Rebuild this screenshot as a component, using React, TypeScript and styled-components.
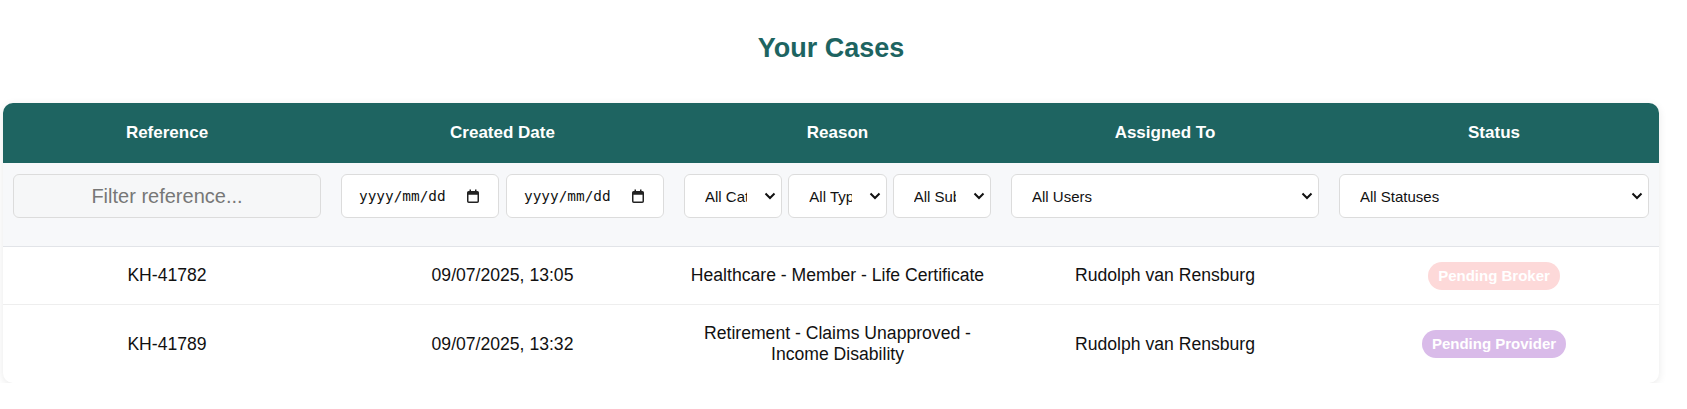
import styled, { createGlobalStyle } from "styled-components";

const GlobalStyle = createGlobalStyle`
  body {
    margin: 0;
    background: #ffffff;
    font-family: "Liberation Sans", Arial, sans-serif;
    color: #111111;
  }
`;

const COLUMNS = "328px 343px 327px 328px 1fr";

const Page = styled.div`
  width: 1656px;
  margin-left: 3px;
  padding-top: 33px;
`;

const Title = styled.h1`
  margin: 0 0 39px;
  text-align: center;
  font-size: 27px;
  line-height: 31px;
  font-weight: 700;
  color: #1d6461;
`;

const Card = styled.div`
  background: #ffffff;
  border-radius: 10px;
  overflow: hidden;
  box-shadow: 0 2px 8px rgba(0, 0, 0, 0.09);
`;

const HeaderRow = styled.div`
  display: grid;
  grid-template-columns: ${COLUMNS};
  height: 60px;
  align-items: center;
  background: #1e6461;
`;

const HeaderCell = styled.div`
  text-align: center;
  color: #ffffff;
  font-weight: 700;
  font-size: 17px;
`;

const FilterRow = styled.div`
  display: grid;
  grid-template-columns: ${COLUMNS};
  background: #f7f8fa;
  border-bottom: 1px solid #e2e4e8;
`;

const FilterCell = styled.div`
  display: flex;
  gap: 7px;
  padding: 11px 10px 28px;
`;

const SelectGroup = styled.div`
  display: flex;
  gap: 6px;
  width: 100%;
`;

const TextFilter = styled.input`
  box-sizing: border-box;
  width: 100%;
  height: 44px;
  padding: 0 16px;
  border: 1px solid #dcdcdc;
  border-radius: 6px;
  background: #f6f7f8;
  font-family: "Liberation Sans", Arial, sans-serif;
  font-size: 20px;
  text-align: center;
  color: #333;

  &::placeholder {
    color: #777777;
  }
`;

const FieldWrap = styled.div`
  position: relative;
  flex: 1;
  min-width: 0;
  display: flex;
`;

const DateFilter = styled.input`
  box-sizing: border-box;
  width: 100%;
  height: 44px;
  padding: 0 40px 0 17px;
  border: 1px solid #dcdcdc;
  border-radius: 6px;
  background: #ffffff;
  font-family: "DejaVu Sans Mono", monospace;
  font-size: 14.4px;
  color: #111;

  &::placeholder {
    color: #111111;
  }
`;

const FieldIcon = styled.svg<{ $right: number }>`
  position: absolute;
  top: 50%;
  right: ${(p) => p.$right}px;
  transform: translateY(-50%);
  pointer-events: none;
`;

const SelectFilter = styled.select`
  box-sizing: border-box;
  width: 100%;
  height: 44px;
  padding: 0 34px 0 20px;
  border: 1px solid #dcdcdc;
  border-radius: 6px;
  background: #ffffff;
  appearance: none;
  font-family: "Liberation Sans", Arial, sans-serif;
  font-size: 15px;
  color: #111;
`;

const DataRow = styled.div`
  display: grid;
  grid-template-columns: ${COLUMNS};
  align-items: center;
  border-bottom: 1px solid #eeeeee;

  &:last-child {
    border-bottom: none;
  }
`;

const DataCell = styled.div<{ $compact?: boolean }>`
  padding: ${(p) => (p.$compact ? "10px" : "18px")} 10px;
  text-align: center;
  font-size: 17.6px;
  line-height: 21px;
  color: #111111;
`;

const Badge = styled.span<{ $bg: string }>`
  display: inline-block;
  vertical-align: middle;
  padding: 5px 10px;
  border-radius: 999px;
  background: ${(p) => p.$bg};
  color: #ffffff;
  font-size: 15px;
  line-height: 18px;
  font-weight: 700;
`;

function CalendarIcon() {
  return (
    <FieldIcon $right={20} width="12" height="14" viewBox="0 0 12 14">
      <rect x="0.75" y="2.75" width="10.5" height="10.5" rx="1" fill="none" stroke="#222" strokeWidth="1.5" />
      <rect x="0.75" y="2.75" width="10.5" height="3" fill="#222" />
      <rect x="2.5" y="0.5" width="1.5" height="2.5" fill="#222" />
      <rect x="8" y="0.5" width="1.5" height="2.5" fill="#222" />
    </FieldIcon>
  );
}

function ChevronIcon() {
  return (
    <FieldIcon $right={6} width="12" height="8" viewBox="0 0 12 8">
      <path d="M1.5 1.5 L6 6 L10.5 1.5" fill="none" stroke="#111" strokeWidth="2" />
    </FieldIcon>
  );
}

function DateField() {
  return (
    <FieldWrap>
      <DateFilter type="text" placeholder="yyyy/mm/dd" />
      <CalendarIcon />
    </FieldWrap>
  );
}

function SelectField({ label }: { label: string }) {
  return (
    <FieldWrap>
      <SelectFilter defaultValue="">
        <option value="">{label}</option>
      </SelectFilter>
      <ChevronIcon />
    </FieldWrap>
  );
}

const statusColors: Record<string, string> = {
  "Pending Broker": "#fdd9d9",
  "Pending Provider": "#d9bbe9",
};

const cases = [
  {
    ref: "KH-41782",
    created: "09/07/2025, 13:05",
    reason: "Healthcare - Member - Life Certificate",
    assigned: "Rudolph van Rensburg",
    status: "Pending Broker",
  },
  {
    ref: "KH-41789",
    created: "09/07/2025, 13:32",
    reason: "Retirement - Claims Unapproved - Income Disability",
    assigned: "Rudolph van Rensburg",
    status: "Pending Provider",
  },
];

export default function App() {
  return (
    <>
      <GlobalStyle />
      <Page>
        <Title>Your Cases</Title>
        <Card>
          <HeaderRow>
            <HeaderCell>Reference</HeaderCell>
            <HeaderCell>Created Date</HeaderCell>
            <HeaderCell>Reason</HeaderCell>
            <HeaderCell>Assigned To</HeaderCell>
            <HeaderCell>Status</HeaderCell>
          </HeaderRow>
          <FilterRow>
            <FilterCell>
              <TextFilter placeholder="Filter reference..." />
            </FilterCell>
            <FilterCell>
              <DateField />
              <DateField />
            </FilterCell>
            <FilterCell>
              <SelectGroup>
                <SelectField label="All Categories" />
                <SelectField label="All Types" />
                <SelectField label="All Subtypes" />
              </SelectGroup>
            </FilterCell>
            <FilterCell>
              <SelectField label="All Users" />
            </FilterCell>
            <FilterCell>
              <SelectField label="All Statuses" />
            </FilterCell>
          </FilterRow>
          {cases.map((c) => (
            <DataRow key={c.ref}>
              <DataCell>{c.ref}</DataCell>
              <DataCell>{c.created}</DataCell>
              <DataCell>{c.reason}</DataCell>
              <DataCell>{c.assigned}</DataCell>
              <DataCell $compact>
                <Badge $bg={statusColors[c.status]}>{c.status}</Badge>
              </DataCell>
            </DataRow>
          ))}
        </Card>
      </Page>
    </>
  );
}
